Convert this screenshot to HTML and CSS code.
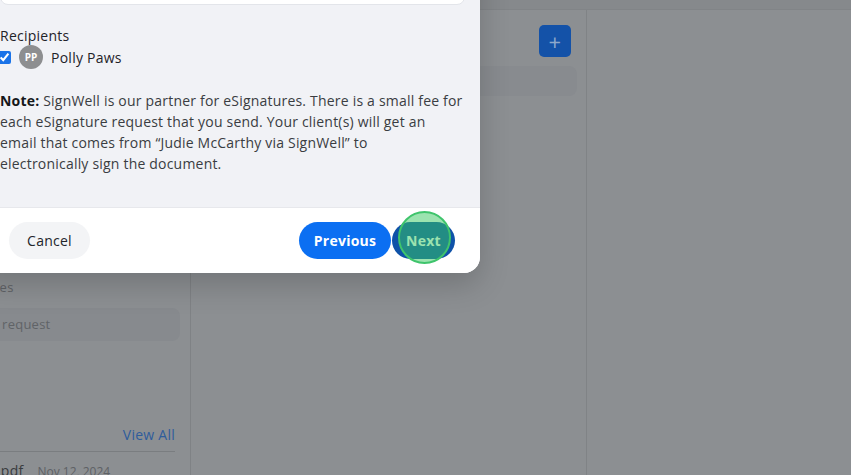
FILE: index.html
```html
<!DOCTYPE html>
<html lang="en">
<head>
    <meta charset="UTF-8">
    <meta name="viewport" content="width=device-width, initial-scale=1.0">
    <title>Send for eSignature</title>
    <link rel="stylesheet" href="styles.css">
</head>
<body>
    <!-- Dimmed page behind the modal -->
    <div class="app">
        <div class="topbar"></div>
        <div class="main">
            <aside class="sidebar">
                <p class="side-label">Signatures</p>
                <div class="side-box">Create request</div>
                <div class="side-head">
                    <a class="view-all">View All</a>
                </div>
                <div class="file-row">
                    <span class="file-name">contract.pdf</span>
                    <span class="file-date">Nov 12, 2024</span>
                </div>
            </aside>

            <section class="center">
                <div class="center-head">
                    <button class="add-btn">+</button>
                </div>
                <div class="center-row"></div>
            </section>

            <section class="right"></section>
        </div>
    </div>

    <!-- eSignature modal -->
    <div class="modal">
        <div class="modal-body">
            <div class="field"></div>

            <p class="recipients-label">Recipients</p>
            <label class="recipient">
                <input type="checkbox" checked>
                <span class="avatar">PP</span>
                <span class="recipient-name">Polly Paws</span>
            </label>

            <p class="note">
                <strong>Note:</strong> SignWell is our partner for eSignatures. There is a small fee for
                each eSignature request that you send. Your client(s) will get an
                email that comes from &ldquo;Judie McCarthy via SignWell&rdquo; to<br>
                electronically sign the document.
            </p>
        </div>

        <div class="modal-footer">
            <button class="cancel-btn">Cancel</button>
            <div class="nav-btns">
                <button class="prev-btn">Previous</button>
                <button class="next-btn">Next</button>
            </div>
        </div>
    </div>

    <!-- Click highlight -->
    <div class="click-ring"></div>
</body>
</html>
```

FILE: styles.css
```css
/* General styling */
* {
    box-sizing: border-box;
}

body {
    margin: 0;
    padding: 0;
    width: 851px;
    height: 475px;
    overflow: hidden;
    position: relative;
    font-family: "Open Sans", Arial, sans-serif;
    letter-spacing: 0.25px;
    background-color: #8c8f92;
}

p {
    margin: 0;
}

button {
    font-family: inherit;
    letter-spacing: inherit;
    border: none;
    cursor: pointer;
}

/* Page behind the overlay */
.app {
    display: flex;
    flex-direction: column;
    height: 100%;
}

.topbar {
    flex-shrink: 0;
    height: 10px;
    background-color: #86898c;
    border-bottom: 1px solid #818487;
}

.main {
    display: flex;
    flex: 1;
}

.sidebar {
    width: 261px;
    margin-left: -70px;
    padding: 268px 15px 0 17px;
    border-right: 1px solid #7f8285;
}

.side-label {
    font-size: 13px;
    line-height: 18px;
    color: #5f6266;
}

.side-box {
    margin: 12px -5px 0 -2px;
    height: 33px;
    padding: 0 12px;
    border-radius: 8px;
    background-color: #878a8e;
    font-size: 13px;
    line-height: 33px;
    color: #606367;
}

.side-head {
    margin-top: 82px;
    padding-bottom: 6px;
    border-bottom: 1px solid #7a7d80;
    text-align: right;
}

.view-all {
    font-size: 14px;
    line-height: 20px;
    color: #2f5c9c;
}

.file-row {
    display: flex;
    align-items: baseline;
    gap: 14px;
    margin: 9px 0 0 -6px;
}

.file-name {
    font-size: 14px;
    color: #3a3c3f;
}

.file-date {
    font-size: 12px;
    letter-spacing: 0;
    color: #5e6165;
}

.center {
    width: 396px;
    padding: 15px 9px 0 0;
    border-right: 1px solid #808386;
}

.center-head {
    display: flex;
    justify-content: flex-end;
    padding-right: 6px;
}

.add-btn {
    width: 32px;
    height: 32px;
    border-radius: 5px;
    background-color: #1452a8;
    color: #8ea8cb;
    font-size: 22px;
    line-height: 32px;
    padding: 0;
}

.center-row {
    margin-top: 9px;
    height: 30px;
    border-radius: 8px;
    background-color: #888b8f;
}

.right {
    flex: 1;
}

/* Modal */
.modal {
    position: absolute;
    top: -60px;
    left: -25px;
    width: 505px;
    background-color: #f1f2f6;
    border-radius: 16px;
    overflow: hidden;
    box-shadow: 0 12px 30px rgba(0, 0, 0, 0.18);
}

.modal-body {
    padding: 25px 15px 33px 25px;
}

.field {
    height: 40px;
    background-color: #ffffff;
    border: 1px solid #e3e5ea;
    border-radius: 8px;
}

.recipients-label {
    margin-top: 21px;
    font-size: 14px;
    line-height: 20px;
    color: #1f2329;
}

.recipient {
    display: flex;
    align-items: center;
    height: 24px;
    margin-top: -1px;
}

.recipient input {
    width: 13px;
    height: 13px;
    margin: 0 8px 0 -2px;
    accent-color: #1a73e8;
}

.avatar {
    width: 24px;
    height: 24px;
    border-radius: 50%;
    background-color: #8d8e90;
    color: #ffffff;
    font-size: 10px;
    font-weight: bold;
    letter-spacing: 0;
    display: flex;
    align-items: center;
    justify-content: center;
    margin-right: 8px;
}

.recipient-name {
    font-size: 14px;
    color: #1f2329;
}

.note {
    margin-top: 21px;
    font-size: 14px;
    line-height: 21px;
    letter-spacing: 0.2px;
    color: #3a3d42;
}

.note strong {
    color: #15171a;
}

.modal-footer {
    display: flex;
    justify-content: space-between;
    align-items: center;
    height: 66px;
    padding: 0 25px 0 34px;
    background-color: #ffffff;
    border-top: 1px solid #e7e8ec;
}

.cancel-btn {
    height: 37px;
    width: 81px;
    border-radius: 19px;
    background-color: #f3f4f6;
    color: #22252b;
    font-size: 14px;
    font-weight: 500;
}

.nav-btns {
    display: flex;
    gap: 1px;
}

.prev-btn, .next-btn {
    height: 37px;
    border-radius: 19px;
    color: #ffffff;
    font-size: 14px;
    font-weight: bold;
}

.prev-btn {
    width: 92px;
    background-color: #0b6ff2;
}

.next-btn {
    width: 63px;
    background-color: #0f52a8;
}

/* Green click highlight */
.click-ring {
    position: absolute;
    left: 398px;
    top: 211px;
    width: 53px;
    height: 53px;
    border-radius: 50%;
    border: 2px solid #3fc46c;
    background-color: rgba(55, 200, 95, 0.5);
}
```
